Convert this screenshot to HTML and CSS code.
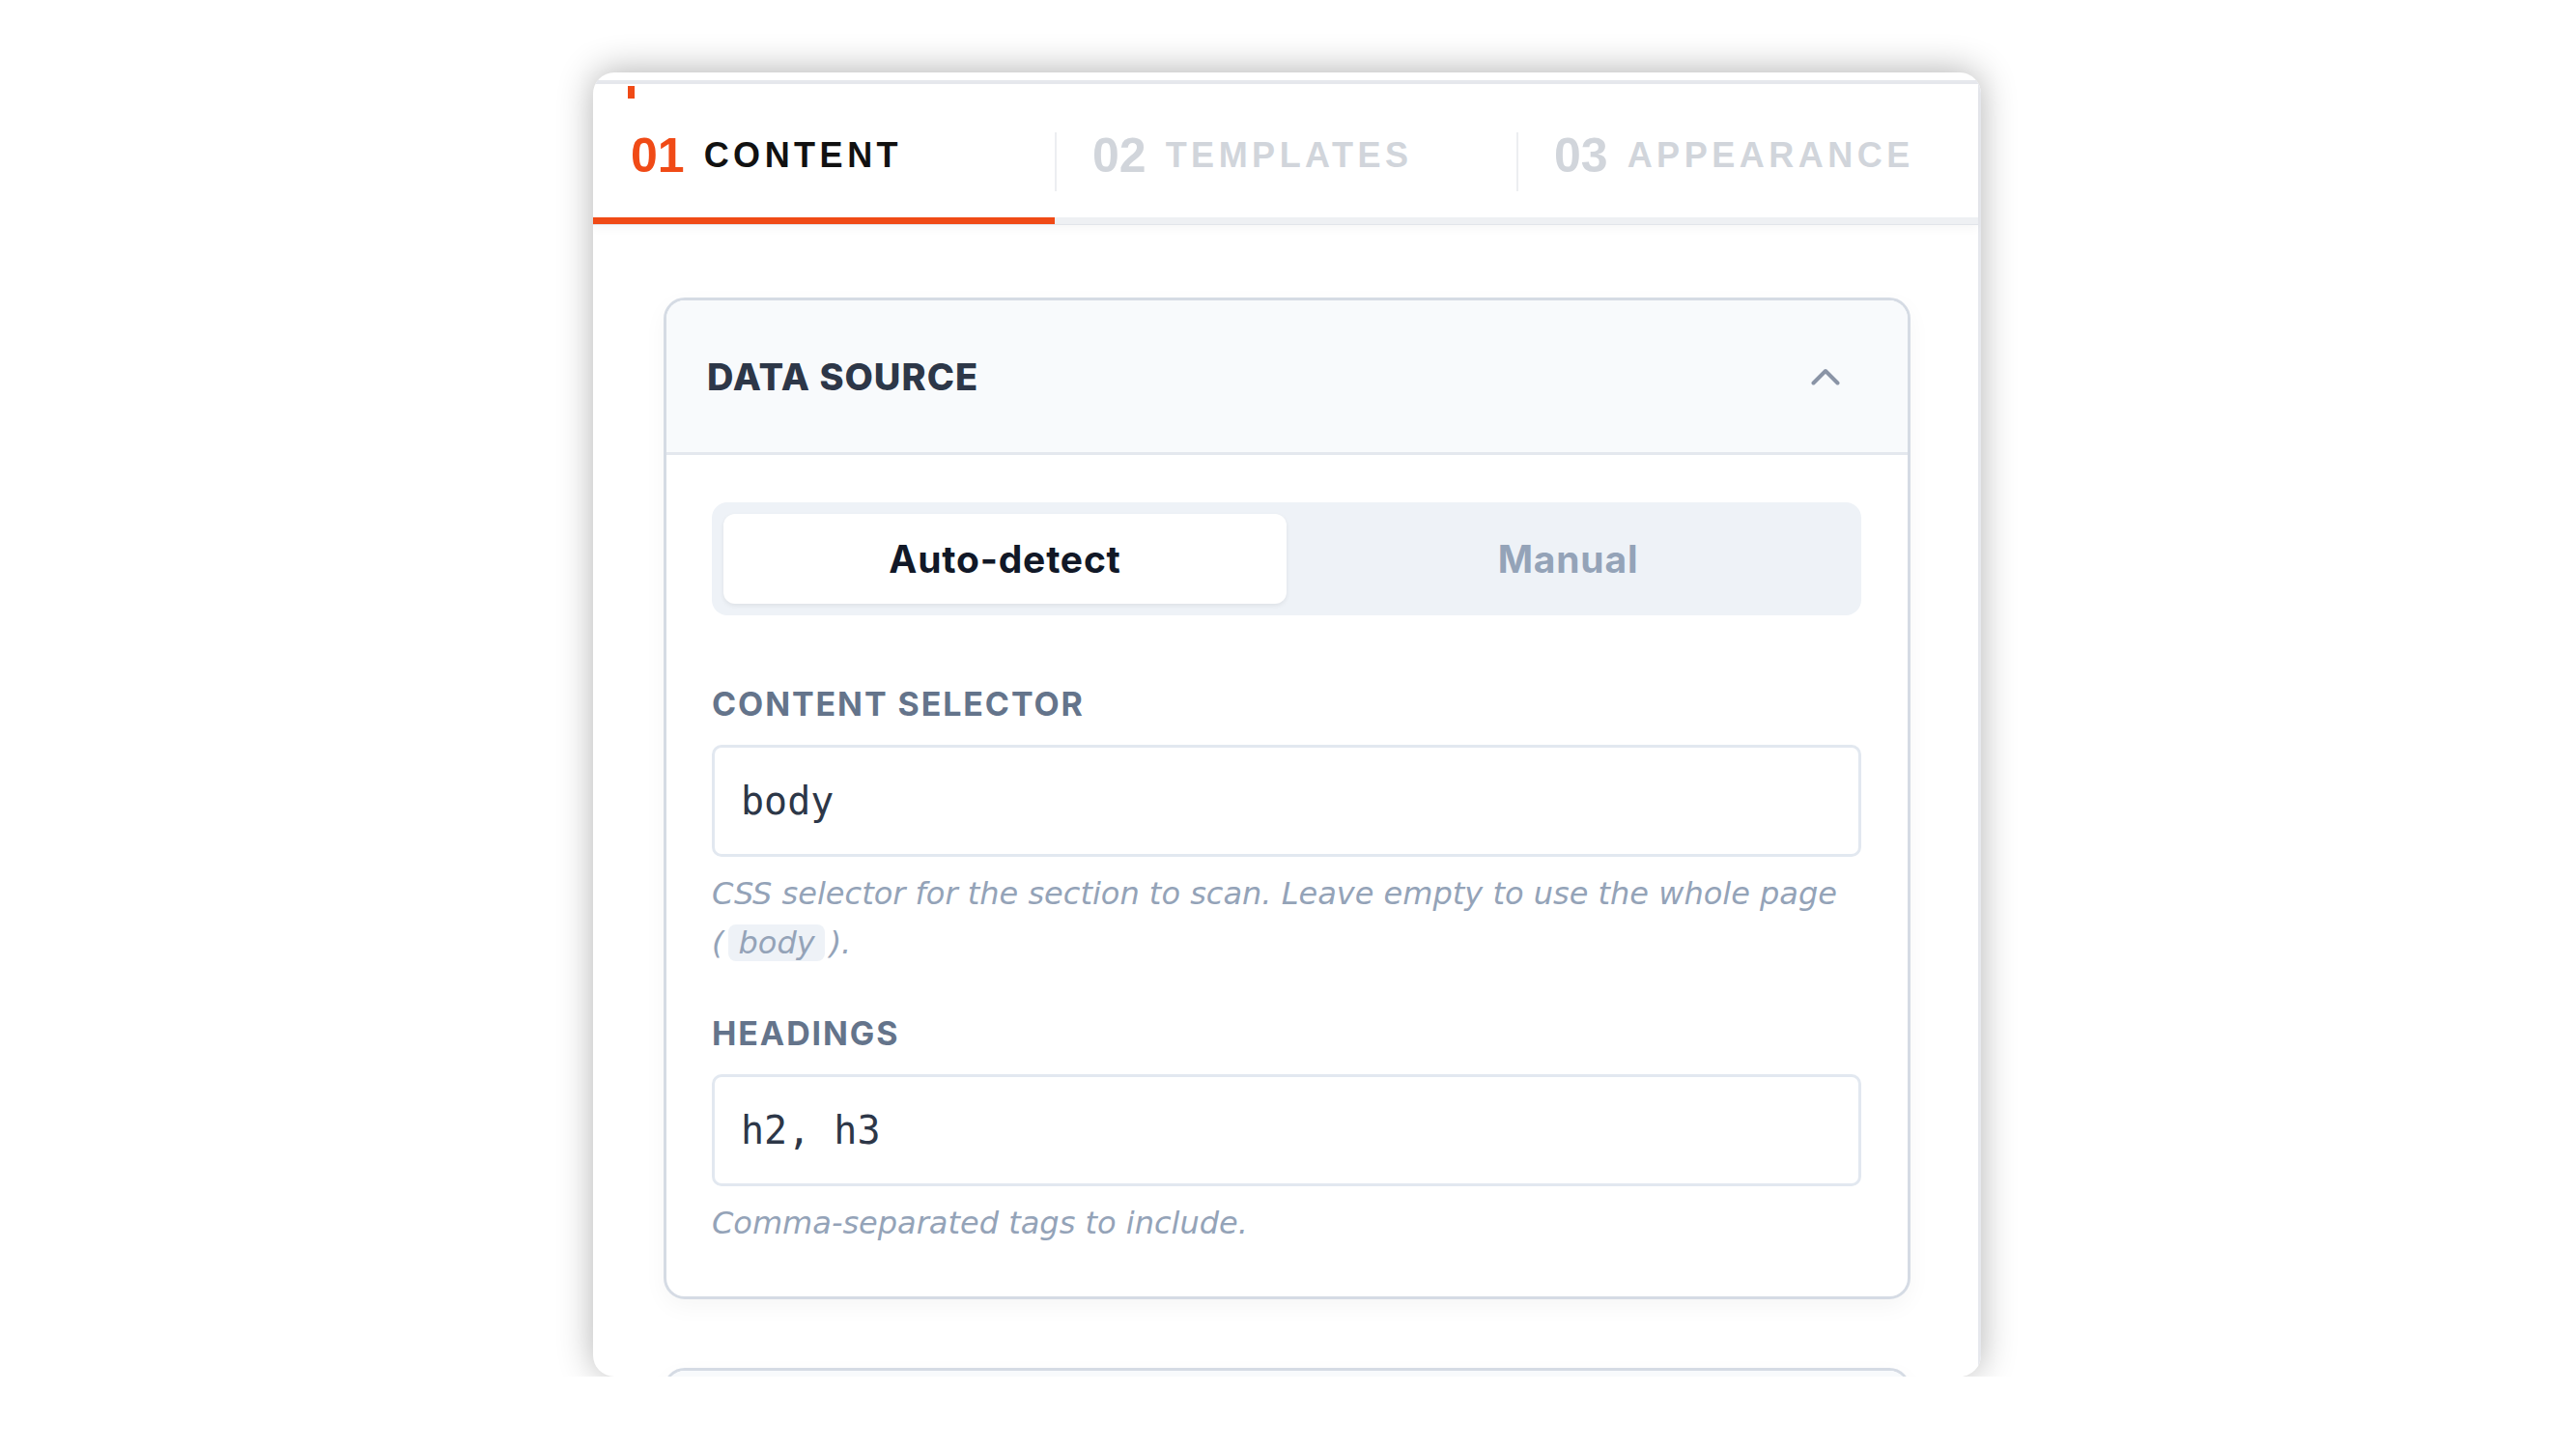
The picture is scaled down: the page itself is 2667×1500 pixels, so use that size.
FILE: index.html
```html
<!DOCTYPE html>
<html>
<head>
    <title>Table of Contents Settings</title>
    <link rel="stylesheet" href="styles.css">
</head>
<body>
    <div class="card">
        <div class="frame">
            <span class="tick"></span>
            <nav class="tabs">
                <div class="tab active">
                    <div class="tab-inner"><span class="num">01</span><span class="name">CONTENT</span></div>
                </div>
                <div class="tab">
                    <div class="tab-inner divided"><span class="num">02</span><span class="name">TEMPLATES</span></div>
                </div>
                <div class="tab">
                    <div class="tab-inner divided"><span class="num">03</span><span class="name">APPEARANCE</span></div>
                </div>
            </nav>
            <div class="content">
                <section class="panel">
                    <header class="panel-head">
                        <h2>DATA SOURCE</h2>
                        <svg class="chevron" width="30" height="18" viewBox="0 0 30 18">
                            <polyline points="2.5,15.5 15,3 27.5,15.5" fill="none" stroke="#8a94a6" stroke-width="4" stroke-linecap="round" stroke-linejoin="round"/>
                        </svg>
                    </header>
                    <div class="panel-body">
                        <div class="segment">
                            <button class="seg active">Auto-detect</button>
                            <button class="seg">Manual</button>
                        </div>
                        <label class="field-label" for="selector">CONTENT SELECTOR</label>
                        <input class="field" type="text" id="selector" value="body">
                        <p class="help">CSS selector for the section to scan. Leave empty to use the whole page (<code>body</code>).</p>
                        <label class="field-label" for="headings">HEADINGS</label>
                        <input class="field" type="text" id="headings" value="h2, h3">
                        <p class="help">Comma-separated tags to include.</p>
                    </div>
                </section>
                <section class="panel">
                    <header class="panel-head"></header>
                </section>
            </div>
        </div>
    </div>
</body>
</html>
```
FILE: styles.css
```css
body {
    margin: 0;
    background: #fff;
    font-family: Inter, "Liberation Sans", sans-serif;
}
.card {
    margin: 75px 0 0 614px;
    width: 1437px;
    height: 1350px;
    overflow: hidden;
    border-radius: 22px;
    background: #fff;
    box-shadow: 0 -2px 36px rgba(0, 0, 0, 0.3);
}
.frame {
    position: relative;
    margin-top: 8px;
    height: 1342px;
    box-sizing: border-box;
    border-top: 4px solid #e6e8ed;
    border-right: 3px solid #e6e8ed;
}
.tick {
    position: absolute;
    left: 36px;
    top: 2px;
    width: 7px;
    height: 13px;
    background: #f04a16;
}
.tabs {
    display: flex;
    border-bottom: 1px solid #e2e5ea;
    box-shadow: 0 4px 10px rgba(0, 0, 0, 0.035);
}
.tab {
    flex: 1;
    height: 145px;
    box-sizing: border-box;
    padding-top: 50px;
    border-bottom: 7px solid #eef0f3;
}
.tab.active {
    border-bottom-color: #f04a16;
}
.tab-inner {
    display: flex;
    align-items: center;
    gap: 20px;
    height: 61px;
    box-sizing: border-box;
    padding: 0 0 14px 37px;
    border-left: 2px solid transparent;
    font-family: "Liberation Sans", Arial, sans-serif;
    font-weight: bold;
    color: #d1d5db;
}
.tab-inner.divided {
    border-left-color: #eceef1;
}
.num {
    font-size: 50px;
}
.name {
    font-size: 36px;
    letter-spacing: 4.5px;
}
.active .num {
    color: #f04a16;
}
.active .name {
    color: #111;
}
.content {
    padding: 75px 70px 0 73px;
}
.panel {
    border: 3px solid #d5dbe4;
    border-radius: 22px;
    overflow: hidden;
    background: #fff;
    box-shadow: 0 8px 24px rgba(0, 0, 0, 0.04);
    margin-bottom: 71px;
}
.panel-head {
    display: flex;
    align-items: center;
    justify-content: space-between;
    height: 157px;
    padding: 0 70px 0 42px;
    background: #f8fafc;
    border-bottom: 3px solid #e4e8ee;
}
.panel-head h2 {
    margin: 0;
    font-size: 38px;
    font-weight: 800;
    letter-spacing: 1px;
    color: #2d3748;
}
.panel-body {
    padding: 49px 48px 50px 47px;
}
.segment {
    display: flex;
    padding: 12px;
    border-radius: 16px;
    background: #eef2f7;
}
.seg {
    flex: 1;
    height: 93px;
    border: none;
    border-radius: 12px;
    background: transparent;
    font-family: Inter, sans-serif;
    font-size: 39px;
    font-weight: 700;
    letter-spacing: 0.8px;
    color: #94a3b8;
    cursor: pointer;
}
.seg.active {
    background: #fff;
    color: #111827;
    box-shadow: 0 2px 5px rgba(0, 0, 0, 0.07);
}
.field-label {
    display: block;
    margin-top: 72px;
    font-size: 34px;
    line-height: 40px;
    font-weight: 700;
    letter-spacing: 1.9px;
    color: #64748b;
}
.field-label + .field {
    margin-top: 22px;
}
.field {
    display: block;
    width: 100%;
    height: 116px;
    box-sizing: border-box;
    padding: 0 27px;
    border: 3px solid #e2e8f0;
    border-radius: 10px;
    font-family: "DejaVu Sans Mono", monospace;
    font-size: 40px;
    color: #2d3748;
    background: #fff;
}
.help {
    margin: 13px 0 0;
    font-family: "DejaVu Sans", sans-serif;
    font-style: italic;
    font-size: 32px;
    line-height: 51px;
    color: #94a3b8;
}
.help + .field-label {
    margin-top: 48px;
}
.help code {
    font-family: inherit;
    padding: 0 10px;
    margin: 0 5px;
    border-radius: 8px;
    background: #eef2f7;
}
```
